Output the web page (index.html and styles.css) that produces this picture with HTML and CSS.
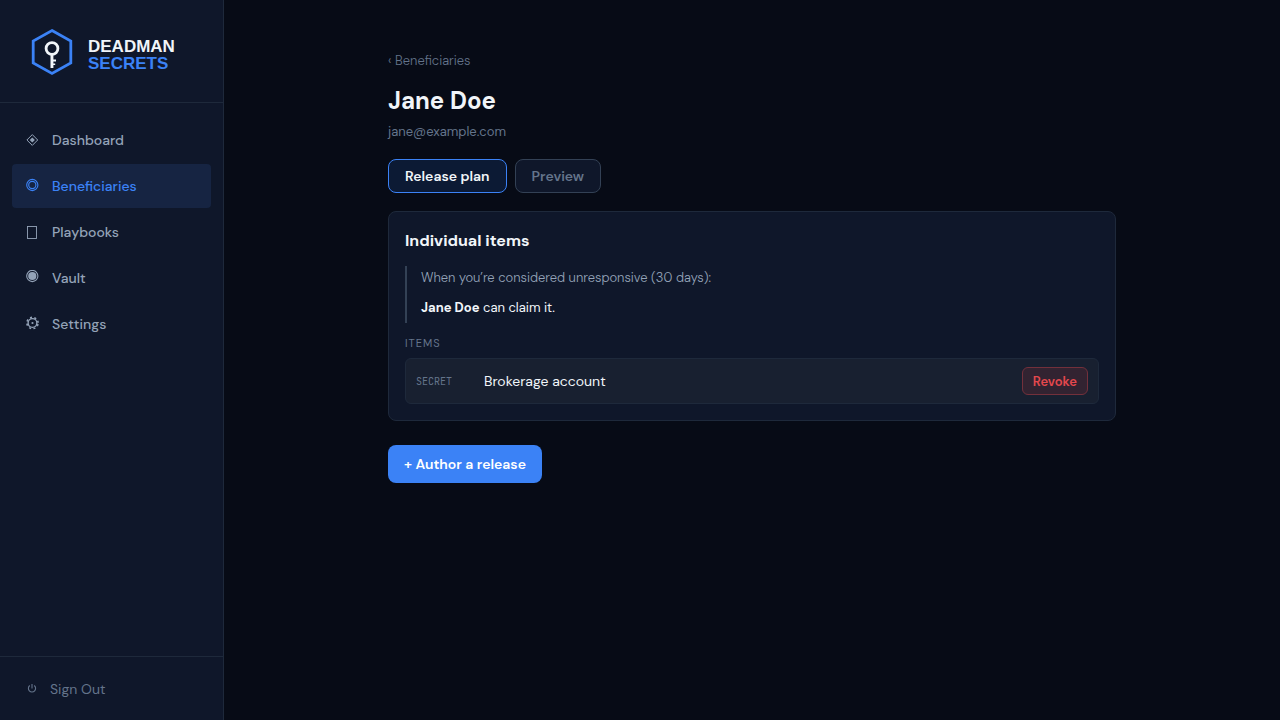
FILE: index.html
```html
<!DOCTYPE html>
<html lang="en">

<head>
    <meta charset="UTF-8">
    <meta name="viewport" content="width=device-width, initial-scale=1.0">
    <title>Jane Doe - Deadman Secrets</title>
    <link rel="stylesheet" href="styles.css">
</head>

<body>

    <aside class="sidebar">
        <a href="#" class="brand">
            <svg class="brand-mark" viewBox="0 0 48 48" aria-hidden="true">
                <path d="M24 2.5 L42.8 13 V35 L24 45.5 L5.2 35 V13 Z" fill="none" stroke="#3b82f6" stroke-width="2.8"/>
                <circle cx="24" cy="20.5" r="5.9" fill="none" stroke="#f1f5f9" stroke-width="2.8"/>
                <path d="M22.5 26 H25.4 V31.6 H28 V33.4 H25.4 V35.4 H27.2 V37 H25.4 V40 H22.5 Z" fill="#f1f5f9"/>
            </svg>
            <span class="brand-name">DEADMAN<br><span class="brand-accent">SECRETS</span></span>
        </a>

        <nav class="nav">
            <a href="#" class="nav-link">
                <svg class="nav-icon" viewBox="0 0 16 16" aria-hidden="true">
                    <path d="M6.3 2.6 L11.7 8 L6.3 13.4 L0.9 8 Z" fill="none" stroke="currentColor"/>
                    <path d="M6.3 5.4 L8.9 8 L6.3 10.6 L3.7 8 Z" fill="currentColor"/>
                </svg>Dashboard
            </a>
            <a href="#" class="nav-link active">
                <svg class="nav-icon" viewBox="0 0 16 16" aria-hidden="true">
                    <circle cx="6.3" cy="7" r="5.6" fill="none" stroke="currentColor" stroke-width="1.1"/>
                    <circle cx="6.3" cy="7" r="3.6" fill="none" stroke="currentColor" stroke-width="1.1"/>
                </svg>Beneficiaries
            </a>
            <a href="#" class="nav-link">
                <svg class="nav-icon" viewBox="0 0 16 16" aria-hidden="true">
                    <rect x="1.5" y="2.5" width="9" height="12" fill="none" stroke="currentColor" stroke-width="0.9"/>
                </svg>Playbooks
            </a>
            <a href="#" class="nav-link">
                <svg class="nav-icon" viewBox="0 0 16 16" aria-hidden="true">
                    <circle cx="6.3" cy="6" r="5.6" fill="none" stroke="currentColor" stroke-width="1.1"/>
                    <circle cx="6.3" cy="6" r="4.1" fill="currentColor"/>
                </svg>Vault
            </a>
            <a href="#" class="nav-link">
                <svg class="nav-icon" viewBox="0 0 16 16" aria-hidden="true">
                    <circle cx="6.5" cy="7" r="4.4" fill="none" stroke="currentColor" stroke-width="1.4"/>
                    <circle cx="6.5" cy="7" r="5.6" fill="none" stroke="currentColor" stroke-width="1.6" stroke-dasharray="2 2.4" stroke-dashoffset="-1.2"/>
                    <circle cx="6.5" cy="7" r="1.1" fill="currentColor"/>
                </svg>Settings
            </a>
        </nav>

        <div class="sidebar-footer">
            <button type="button" class="sign-out">
                <svg class="power-icon" viewBox="0 0 12 12" aria-hidden="true">
                    <path d="M3.8 2.5 A3.6 3.6 0 1 0 8.2 2.5 M6 1 V5.6" fill="none" stroke="currentColor" stroke-width="1.1"/>
                </svg>Sign Out
            </button>
        </div>
    </aside>

    <main class="main">
        <div class="content">
            <a href="#" class="back-link">‹ Beneficiaries</a>
            <h1>Jane Doe</h1>
            <p class="email">jane@example.com</p>

            <div class="tabs">
                <button type="button" class="tab active">Release plan</button>
                <button type="button" class="tab">Preview</button>
            </div>

            <section class="card">
                <h2>Individual items</h2>
                <div class="condition">
                    <p class="condition-when">When you’re considered unresponsive (30 days):</p>
                    <p><strong>Jane Doe</strong> can claim it.</p>
                </div>
                <h3>Items</h3>
                <div class="item">
                    <span class="item-type">SECRET</span>
                    <span class="item-name">Brokerage account</span>
                    <button type="button" class="revoke">Revoke</button>
                </div>
            </section>

            <button type="button" class="author">+ Author a release</button>
        </div>
    </main>

</body>

</html>
```

FILE: styles.css
```css
* {
    margin: 0;
    padding: 0;
    box-sizing: border-box;
}

body {
    font-family: 'DM Sans', 'Inter', sans-serif;
    font-size: 14px;
    background-color: #070b16;
    color: #f1f5f9;
    display: flex;
    min-height: 100vh;
}

a {
    text-decoration: none;
}

button {
    font-family: inherit;
    cursor: pointer;
}

/* SIDEBAR */
.sidebar {
    width: 224px;
    flex-shrink: 0;
    display: flex;
    flex-direction: column;
    background-color: #0f172a;
    border-right: 1px solid #1e293b;
}

.brand {
    display: flex;
    align-items: center;
    gap: 12px;
    padding: 28px;
    padding-bottom: 26px;
    border-bottom: 1px solid #1e293b;
}

.brand-mark {
    width: 48px;
    height: 48px;
}

.brand-name {
    font-family: 'Liberation Sans', Arial, sans-serif;
    font-size: 17px;
    font-weight: 700;
    line-height: 17px;
    padding-top: 6px;
    color: #f1f5f9;
}

.brand-accent {
    color: #3b82f6;
}

.nav {
    flex: 1;
    display: flex;
    flex-direction: column;
    gap: 2px;
    padding: 15px 12px;
}

.nav-link {
    display: flex;
    align-items: center;
    gap: 10px;
    height: 44px;
    padding: 0 14px;
    border-radius: 4px;
    font-size: 14px;
    font-weight: 500;
    color: #94a3b8;
}

.nav-link.active {
    background-color: #162442;
    color: #3b82f6;
}

.nav-icon {
    width: 16px;
    height: 16px;
}

.sidebar-footer {
    padding: 10px 12px;
    border-top: 1px solid #1e293b;
}

.sign-out {
    display: flex;
    align-items: center;
    gap: 12px;
    width: 100%;
    height: 43px;
    padding: 0 14px;
    border: none;
    background: none;
    font-size: 14px;
    color: #64748b;
}

.power-icon {
    width: 12px;
    height: 12px;
}

/* CONTENT */
.main {
    flex: 1;
    padding: 51px 32px;
}

.content {
    max-width: 728px;
    margin: 0 auto;
}

.back-link {
    display: block;
    margin-bottom: 14px;
    font-size: 13px;
    font-weight: 300;
    line-height: 20px;
    color: #64748b;
}

h1 {
    font-size: 24px;
    line-height: 32px;
    margin-bottom: 4px;
}

.email {
    margin-bottom: 16px;
    font-size: 13px;
    line-height: 22px;
    color: #64748b;
}

.tabs {
    display: flex;
    gap: 8px;
    margin-bottom: 18px;
}

.tab {
    height: 34px;
    padding: 0 16px;
    border: 1px solid #334155;
    border-radius: 8px;
    background-color: #0f172a;
    font-size: 14px;
    font-weight: 600;
    color: #64748b;
}

.tab.active {
    border-color: #3b82f6;
    background-color: #0c1a34;
    color: #f1f5f9;
}

.card {
    padding: 16px;
    margin-bottom: 24px;
    border: 1px solid #1e293b;
    border-radius: 8px;
    background-color: #0f172a;
}

h2 {
    font-size: 16px;
    line-height: 26px;
    margin-bottom: 12px;
}

.condition {
    display: flex;
    flex-direction: column;
    gap: 6px;
    margin-bottom: 12px;
    padding: 0 0 3px 14px;
    border-left: 2px solid #334155;
    font-size: 13px;
    line-height: 24px;
}

.condition-when {
    font-weight: 300;
    color: #94a3b8;
}

h3 {
    margin-bottom: 7px;
    font-size: 11px;
    font-weight: 400;
    line-height: 16px;
    letter-spacing: 1px;
    text-transform: uppercase;
    color: #64748b;
}

.item {
    display: flex;
    align-items: center;
    gap: 12px;
    padding: 8px 10px;
    border: 1px solid #1e293b;
    border-radius: 6px;
    background-color: #182030;
}

.item-type {
    width: 56px;
    font-family: 'JetBrains Mono', 'Liberation Mono', monospace;
    font-size: 10px;
    color: #64748b;
}

.item-name {
    flex: 1;
    font-size: 14px;
}

.revoke {
    height: 28px;
    padding: 0 10px;
    border: 1px solid #73303b;
    border-radius: 6px;
    background-color: #322331;
    font-size: 13px;
    font-weight: 600;
    color: #e5484d;
}

.author {
    height: 38px;
    padding: 0 16px;
    border: none;
    border-radius: 8px;
    background-color: #3b82f6;
    font-size: 14px;
    font-weight: 600;
    color: #fff;
}
```
